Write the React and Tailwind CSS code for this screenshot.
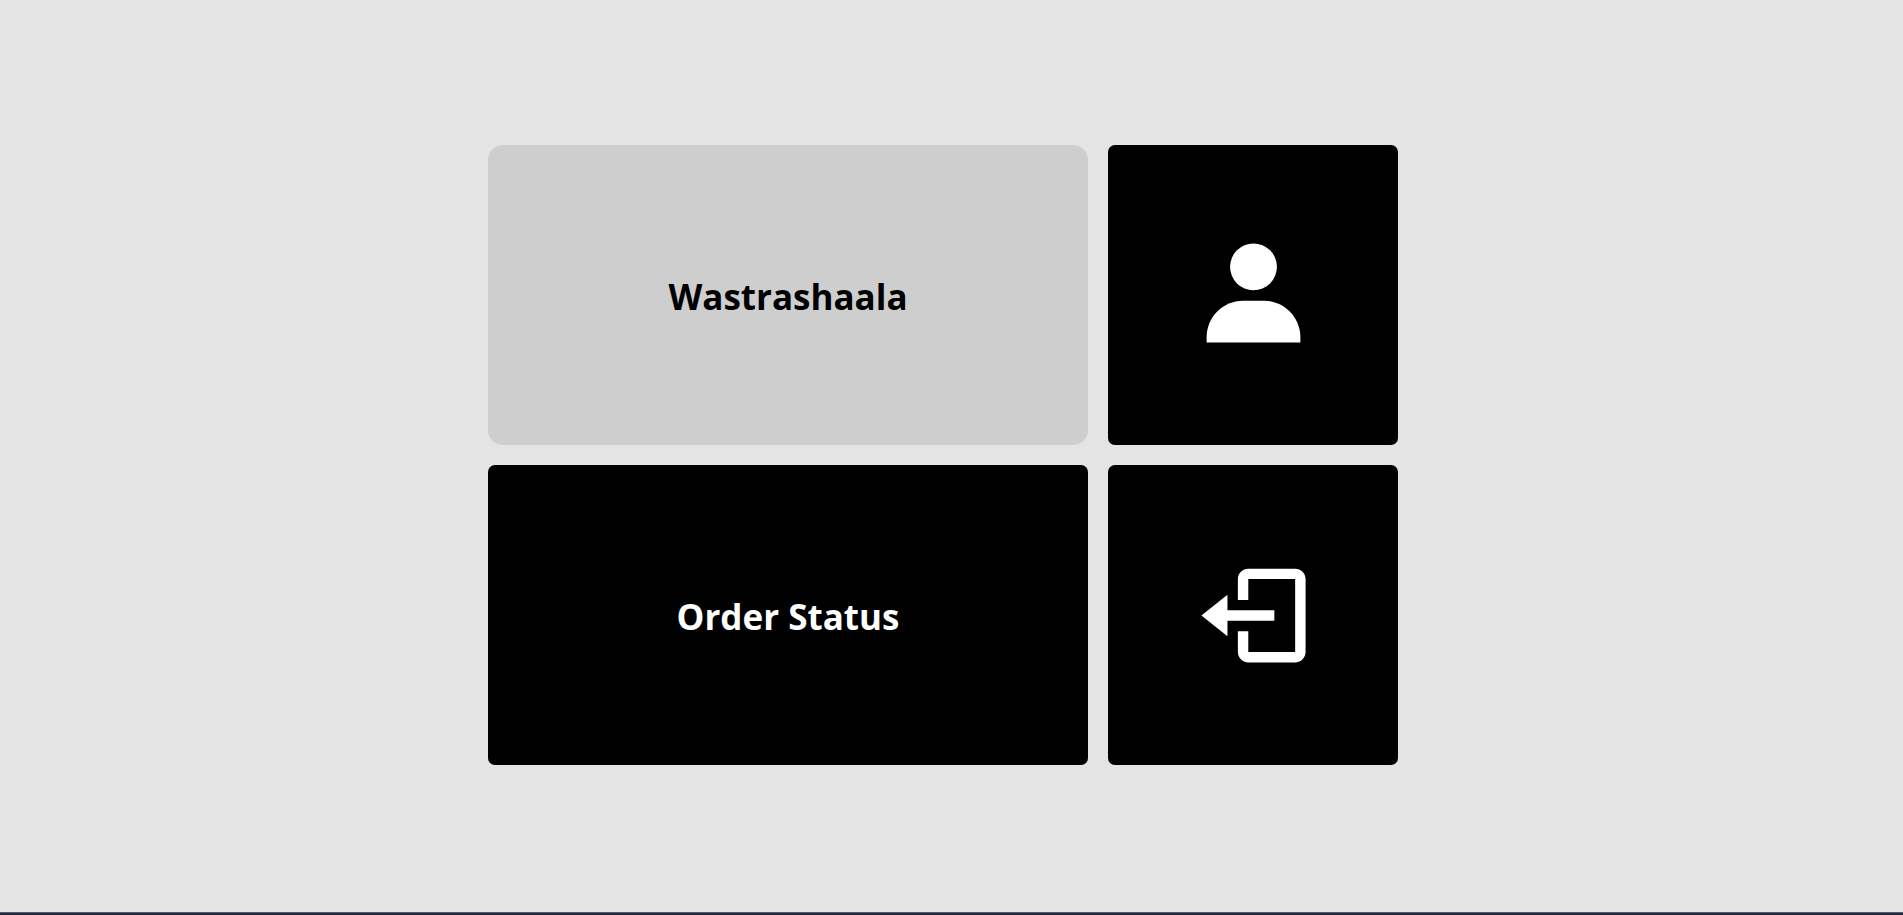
const tile = "flex items-center justify-center rounded-[7px] bg-black text-white";
const title = "pt-1 text-[35px] leading-[52px] font-bold";

function UserIcon() {
  return (
    <svg viewBox="0 0 24 24" className="size-[125px]" fill="currentColor" aria-hidden="true">
      <circle cx="12" cy="6.5" r="4.5" />
      <path d="M21 21v-1c0-3.859-3.141-7-7-7h-4c-3.86 0-7 3.141-7 7v1h18z" />
    </svg>
  );
}

function LogOutIcon() {
  return (
    <svg viewBox="0 0 24 24" className="size-[125px]" fill="currentColor" aria-hidden="true">
      <path d="M16 13v-2H7V8l-5 4 5 4v-3z" />
      <path d="M20 3h-9c-1.103 0-2 .897-2 2v4h2V5h9v14h-9v-4H9v4c0 1.103.897 2 2 2h9c1.103 0 2-.897 2-2V5c0-1.103-.897-2-2-2z" />
    </svg>
  );
}

export default function App() {
  return (
    <div className="flex min-h-screen flex-col bg-[#e4e4e4] font-['Segoe_UI','Open_Sans',sans-serif]">
      <main className="flex grow items-center justify-center pr-[17px] pb-0.5">
        <div className="grid w-full max-w-[910px] grid-cols-[60fr_29fr] auto-rows-[300px] gap-5">
          <div className="flex items-center justify-center rounded-[15px] bg-[#cecece] text-black">
            <h1 className={title}>Wastrashaala</h1>
          </div>
          <a href="#profile" aria-label="Profile" className={tile}>
            <UserIcon />
          </a>
          <a href="#orders" className={tile}>
            <span className={title}>Order Status</span>
          </a>
          <button type="button" aria-label="Log out" className={tile}>
            <LogOutIcon />
          </button>
        </div>
      </main>
      <footer className="h-[3px] border-t border-[#555a69] bg-[#25293d]" />
    </div>
  );
}
